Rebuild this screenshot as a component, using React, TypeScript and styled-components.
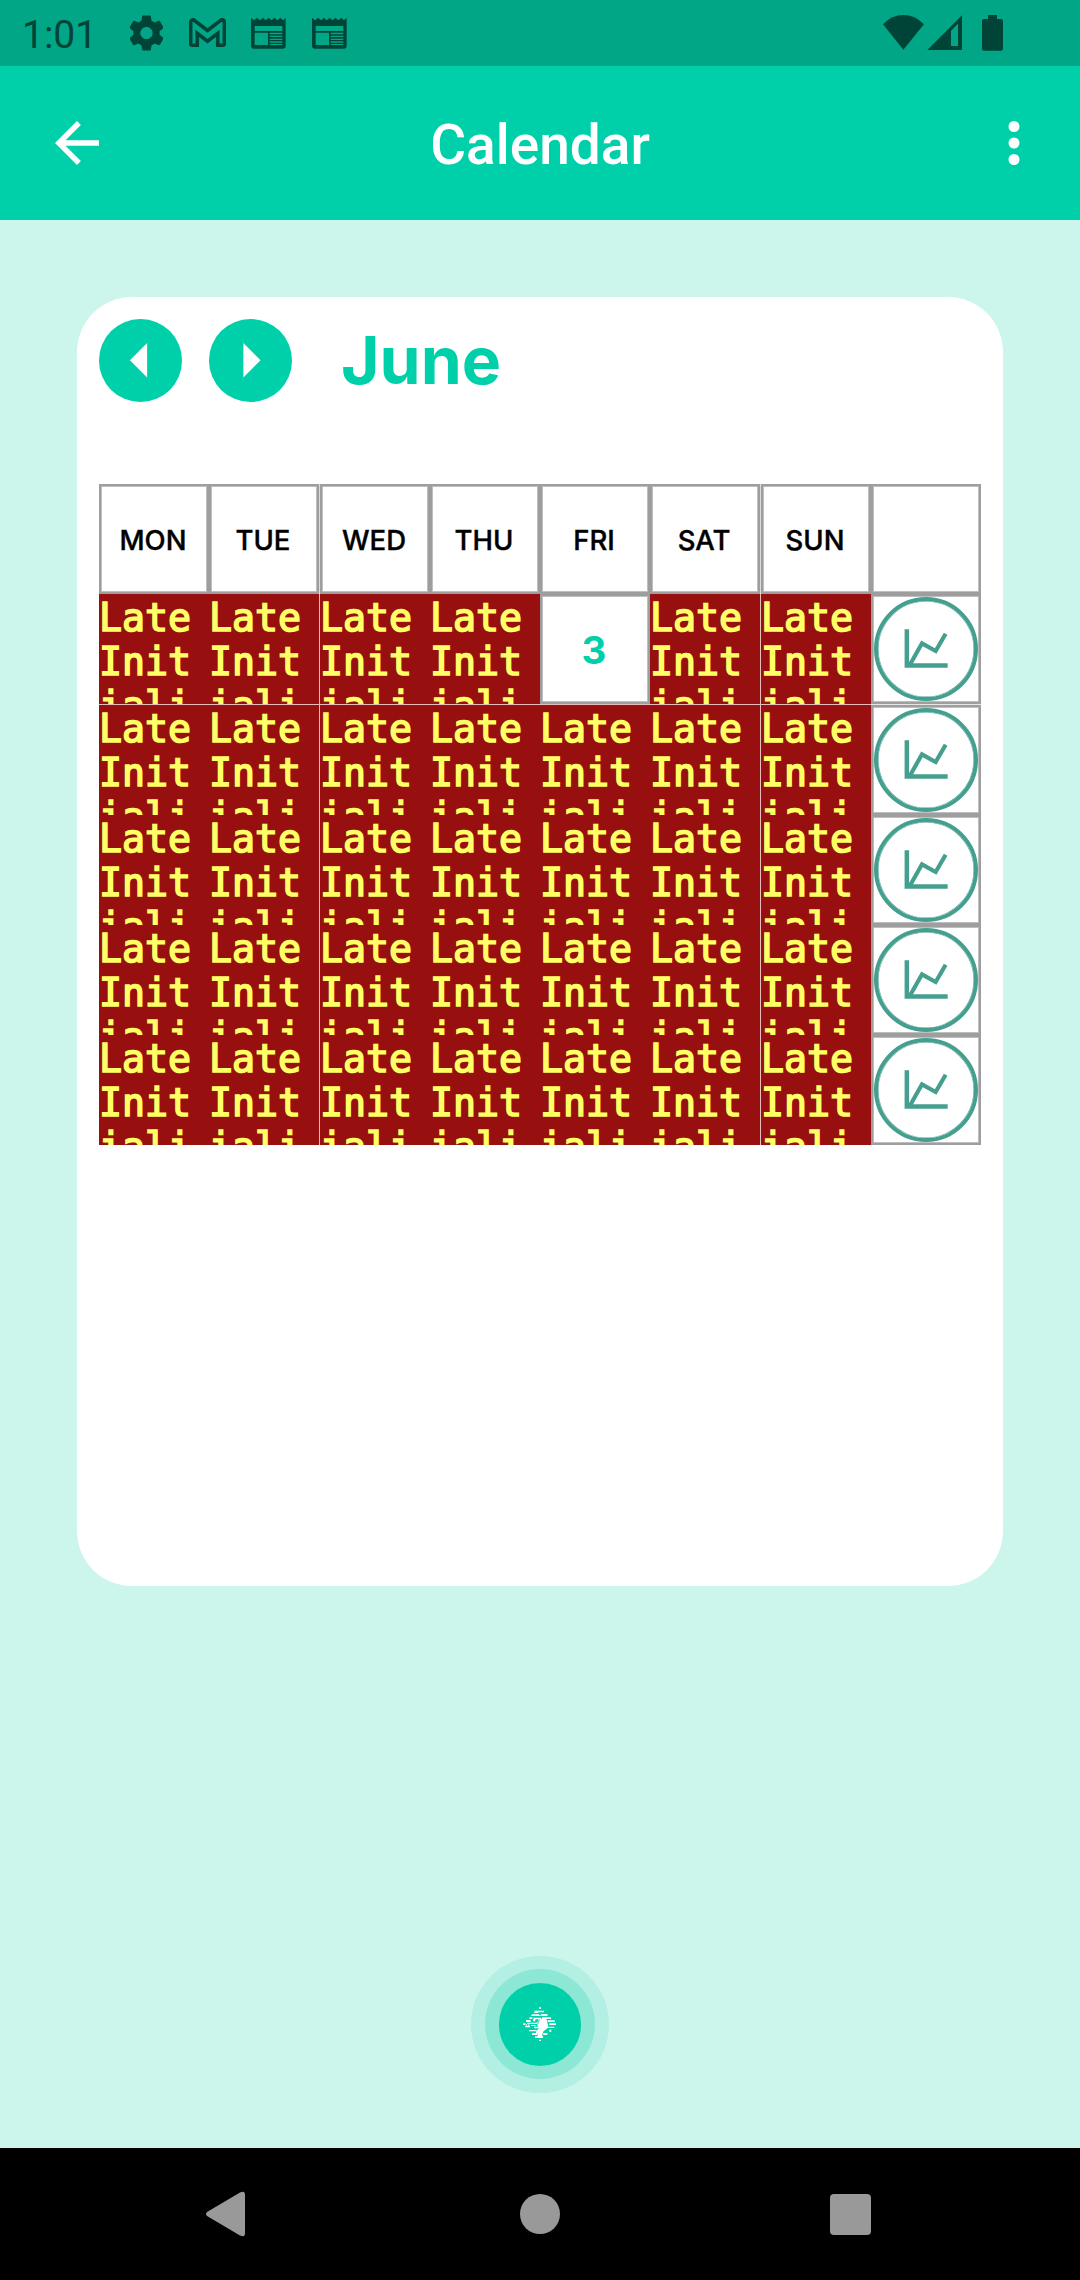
import React from "react";
import styled, { createGlobalStyle, css } from "styled-components";

const colors = {
  primary: "#00d0aa",
  primaryDark: "#00a686",
  statusIcon: "#004438",
  background: "#ccf5ec",
  border: "#9e9e9e",
  borderSoft: "#bebebe",
  error: "#970f0f",
  errorText: "#ffff66",
  chart: "#459f8f",
};

const GlobalStyle = createGlobalStyle`
  *, *::before, *::after { box-sizing: border-box; }
  body { margin: 0; background: ${colors.background}; }
  svg { display: block; flex: none; }
`;

const Screen = styled.div`
  display: flex;
  flex-direction: column;
  width: 1080px;
  height: 2280px;
  background: ${colors.background};
  font-family: Inter, Roboto, sans-serif;
  overflow: hidden;
`;

const StatusBar = styled.div`
  display: flex;
  align-items: center;
  justify-content: space-between;
  flex: none;
  height: 66px;
  padding: 0 77px 0 22px;
  background: ${colors.primaryDark};
  color: ${colors.statusIcon};
`;

const StatusGroup = styled.div`
  display: flex;
  align-items: center;
`;

const NotificationIcons = styled(StatusGroup)`
  gap: 25.5px;
`;

const Clock = styled.span`
  width: 108px;
  padding-top: 3px;
  font: 400 39px/46px Roboto, sans-serif;
`;

const AppBar = styled.header`
  display: grid;
  grid-template-columns: 66px 1fr 66px;
  align-items: center;
  flex: none;
  height: 154px;
  padding: 0 33px 0 44px;
  background: ${colors.primary};
  color: #fff;
`;

const Title = styled.h1`
  margin: 0 11px 0 0;
  padding-top: 4px;
  text-align: center;
  font: 500 55px/64px Roboto, sans-serif;
`;

const IconButton = styled.button`
  display: flex;
  width: 66px;
  height: 66px;
  padding: 0;
  border: 0;
  background: none;
  color: inherit;
`;

const Body = styled.main`
  display: flex;
  flex-direction: column;
  align-items: center;
  flex: 1;
  padding: 77px 77px 55px;
`;

const Card = styled.section`
  width: 926px;
  height: 1289px;
  padding: 22px;
  border-radius: 55px;
  background: #fff;
`;

const MonthBar = styled.div`
  display: flex;
  align-items: center;
  gap: 27.5px;
  height: 83px;
  margin-bottom: 82px;
`;

const RoundButton = styled.button`
  width: 82.5px;
  height: 82.5px;
  padding: 0;
  border: 0;
  border-radius: 50%;
  background: ${colors.primary};
  color: #fff;
`;

const MonthName = styled.h2`
  margin: 0 0 2px 22px;
  color: ${colors.primary};
  font: 700 66px/80px Inter, sans-serif;
`;

const MonthGrid = styled.div`
  display: grid;
  grid-template-columns: 110px 111px 110px 110px 110px 111px 110px 110px;
  grid-template-rows: 110px 111px repeat(4, 110px);
`;

const Slot = styled.div<{ $seam: string }>`
  background: ${(p) => p.$seam};
`;

const cellBase = css`
  width: 110px;
  height: 110px;
  overflow: hidden;
`;

const Cell = styled.div`
  ${cellBase}
  display: flex;
  align-items: center;
  justify-content: center;
  border: 2px solid ${colors.border};
  box-shadow: inset 0 0 0 1px ${colors.borderSoft};
  background: #fff;
`;

const Weekday = styled.span`
  padding: 2px 2px 0 0;
  color: #000;
  font: 500 27.5px/34px Inter, sans-serif;
  -webkit-text-stroke: 0.4px #000;
`;

const DayNumber = styled.span`
  padding: 1px 2px 0 0;
  color: ${colors.primary};
  font: 700 38.5px/46px Inter, sans-serif;
`;

const ErrorCell = styled.div`
  ${cellBase}
  padding-top: 1.5px;
  background: ${colors.error};
  color: ${colors.errorText};
  font: 400 38.2px/44px "DejaVu Sans Mono", monospace;
  -webkit-text-stroke: 1.6px ${colors.errorText};
  word-break: break-all;
`;

const ChartButton = styled.button`
  display: flex;
  align-items: center;
  justify-content: center;
  flex: none;
  width: 104px;
  height: 104px;
  padding: 0;
  border: 4.5px solid ${colors.chart};
  border-radius: 50%;
  background: transparent;
  color: ${colors.chart};
  box-shadow: inset 0 0 0 0.5px ${colors.chart};
`;

const Halo = styled.div<{ $size: number; $color: string }>`
  display: flex;
  align-items: center;
  justify-content: center;
  width: ${(p) => p.$size}px;
  height: ${(p) => p.$size}px;
  border-radius: 50%;
  background: ${(p) => p.$color};
`;

const FabArea = styled.div`
  margin-top: auto;
`;

const NavBar = styled.nav`
  display: flex;
  align-items: center;
  justify-content: space-between;
  flex: none;
  height: 132px;
  padding: 0 209px 0 206px;
  background: #000;
  color: #999;
`;

const Gear = () => (
  <svg width="33" height="42" viewBox="2.57 2 18.86 20" fill="currentColor">
    <path d="M19.43 12.98c.04-.32.07-.64.07-.98s-.03-.66-.07-.98l2.11-1.65c.19-.15.24-.42.12-.64l-2-3.46c-.12-.22-.39-.3-.61-.22l-2.49 1c-.52-.4-1.08-.73-1.69-.98l-.38-2.65C14.46 2.18 14.25 2 14 2h-4c-.25 0-.46.18-.49.42l-.38 2.65c-.61.25-1.17.59-1.69.98l-2.49-1c-.23-.09-.49 0-.61.22l-2 3.46c-.13.22-.07.49.12.64l2.11 1.65c-.04.32-.07.65-.07.98s.03.66.07.98l-2.11 1.65c-.19.15-.24.42-.12.64l2 3.46c.12.22.39.3.61.22l2.49-1c.52.4 1.08.73 1.69.98l.38 2.65c.03.24.24.42.49.42h4c.25 0 .46-.18.49-.42l.38-2.65c.61-.25 1.17-.59 1.69-.98l2.49 1c.23.09.49 0 .61-.22l2-3.46c.12-.22.07-.49-.12-.64l-2.11-1.65zM12 15.5c-1.93 0-3.5-1.57-3.5-3.5s1.57-3.5 3.5-3.5 3.5 1.57 3.5 3.5-1.57 3.5-3.5 3.5z" />
  </svg>
);

const Mail = () => (
  <svg width="37" height="30" viewBox="0 0 112 90" fill="none" stroke="currentColor" strokeWidth="11">
    <path d="M5 14Q5 5 14 5L56 37 98 5Q107 5 107 14V77Q107 82 102 82H87V46L56 70 25 46V82H10Q5 82 5 77Z" />
  </svg>
);

const News = () => (
  <svg width="35" height="32" viewBox="0 0 105 96" fill="currentColor">
    <path
      fillRule="evenodd"
      d="M0 2L9 10 18 2 27 10 36 2 44 10 53 2 62 10 70 2 79 10 88 2 96 10 104 2V86Q104 95 95 95H9Q0 95 0 86ZM11 27V42H94V27ZM11 47V84H51V47ZM56 47V52H94V47ZM56 56V60H94V56ZM56 65V69H94V65ZM56 73V77H94V73ZM56 81V84H94V81Z"
    />
  </svg>
);

const Wifi = () => (
  <svg width="41" height="66" viewBox="0 0 123 198" fill="currentColor">
    <path d="M0 73Q26 45 61 45T123 73L61 149Z" />
  </svg>
);

const Signal = () => (
  <svg width="41" height="66" viewBox="-10 0 123 198" fill="currentColor">
    <path fillRule="evenodd" d="M0 150L104 46V150ZM71 92V138H92V71Z" />
  </svg>
);

const Battery = () => (
  <svg width="38" height="66" viewBox="-51 0 114 198" fill="currentColor">
    <path d="M18 45H45V57H57Q63 57 63 63V146Q63 152 57 152H6Q0 152 0 146V63Q0 57 6 57H18Z" />
  </svg>
);

const Glyph = ({ d, size }: { d: string; size: number }) => (
  <svg width={size} height={size} viewBox="0 0 24 24" fill="currentColor">
    <path d={d} />
  </svg>
);

const LineChart = () => (
  <svg width="44" height="40" viewBox="0 0 132 120" fill="none" stroke="currentColor">
    <path strokeWidth="13.5" d="M8.5 1V109.500H131" />
    <path strokeWidth="12.500" d="M16 110L54 43 95 66 125 14" />
  </svg>
);

const Logo = () => (
  <svg width="36" height="36" viewBox="0 0 108 108" fill="#fff">
    <path d="M51 4h6v5h-6zM42 14h24v5H42zM37 14h5v3h-5zM36 19h12v2H36zM57 24h19v4H57zM30 25h22v4H30zM27 28h50v2H27zM22 34h9v5h-9zM35 35h22v5H35zM60 34h27v5H60zM12 42h14v6H12zM33 40h7v6h-7zM78 43h20v5H78zM4 52h6v5H4zM16 50h32v4H16zM82 52h20v5H82zM10 59h14v5H10zM27 57h14v3H27zM75 62h22v4H75zM21 72h22v4H21zM82 71h6v6h-6zM30 81h16v6H30zM64 81h12v6H64zM39 91h24v5H39zM51 101h6v4h-6z" />
    <path d="M46 57L54 42 60 37H68L76 43V51L79 58 74 69 65 75 61 84V96H47V82H42V76L51 67H36V62H48Z" />
    <circle cx="54" cy="42" r="4" fill="none" stroke="#fff" strokeWidth="2" />
    <circle cx="48" cy="51" r="3.5" fill={colors.primary} stroke="#fff" strokeWidth="2" />
    <circle cx="17" cy="57" r="4" fill={colors.primary} stroke="#fff" strokeWidth="2" />
  </svg>
);

const weekdays = ["MON", "TUE", "WED", "THU", "FRI", "SAT", "SUN", ""];
const weeks: (number | null)[][] = [
  [null, null, null, null, 3, null, null],
  [null, null, null, null, null, null, null],
  [null, null, null, null, null, null, null],
  [null, null, null, null, null, null, null],
  [null, null, null, null, null, null, null],
];

export default function App() {
  return (
    <>
      <GlobalStyle />
      <Screen>
        <StatusBar>
          <StatusGroup>
            <Clock>1:01</Clock>
            <NotificationIcons>
              <Gear />
              <Mail />
              <News />
              <News />
            </NotificationIcons>
          </StatusGroup>
          <StatusGroup>
            <Wifi />
            <Signal />
            <Battery />
          </StatusGroup>
        </StatusBar>

        <AppBar>
          <IconButton aria-label="Back">
            <Glyph size={66} d="M20 11H7.83l5.59-5.59L12 4l-8 8 8 8 1.41-1.41L7.83 13H20v-2z" />
          </IconButton>
          <Title>Calendar</Title>
          <IconButton aria-label="More">
            <Glyph
              size={66}
              d="M12 8a2 2 0 1 0 0-4 2 2 0 0 0 0 4zm0 2a2 2 0 1 0 0 4 2 2 0 0 0 0-4zm0 6a2 2 0 1 0 0 4 2 2 0 0 0 0-4z"
            />
          </IconButton>
        </AppBar>

        <Body>
          <Card>
            <MonthBar>
              <RoundButton aria-label="Previous month">
                <Glyph size={82.5} d="M14 7l-5 5 5 5V7z" />
              </RoundButton>
              <RoundButton aria-label="Next month">
                <Glyph size={82.5} d="M10 17l5-5-5-5v10z" />
              </RoundButton>
              <MonthName>June</MonthName>
            </MonthBar>
            <MonthGrid>
              {weekdays.map((name, i) => (
                <Slot key={i} $seam="#dcdcdc">
                  <Cell>
                    <Weekday>{name}</Weekday>
                  </Cell>
                </Slot>
              ))}
              {weeks.map((week, w) => (
                <React.Fragment key={w}>
                  {week.map((day, d) => (
                    <Slot key={d} $seam="#e6bcbc">
                      {day === null ? (
                        <ErrorCell>LateInitiali</ErrorCell>
                      ) : (
                        <Cell>
                          <DayNumber>{day}</DayNumber>
                        </Cell>
                      )}
                    </Slot>
                  ))}
                  <Slot $seam="#e6e6e6">
                    <Cell>
                      <ChartButton aria-label="Weekly chart">
                        <LineChart />
                      </ChartButton>
                    </Cell>
                  </Slot>
                </React.Fragment>
              ))}
            </MonthGrid>
          </Card>
          <FabArea>
            <Halo $size={137.5} $color="#b3efe3">
              <Halo $size={110} $color="#8ce8d5">
                <Halo $size={82.5} $color={colors.primary}>
                  <Logo />
                </Halo>
              </Halo>
            </Halo>
          </FabArea>
        </Body>

        <NavBar>
          <svg width="44" height="46" viewBox="0 0 44 46" fill="currentColor">
            <path d="M1 21L34 1.5Q39 -1 39 4V42Q39 47 34 44.500L1 25Q-1 23 1 21Z" />
          </svg>
          <svg width="40" height="40" viewBox="0 0 40 40" fill="currentColor">
            <circle cx="20" cy="20" r="20" />
          </svg>
          <svg width="41" height="41" viewBox="0 0 41 41" fill="currentColor">
            <rect width="41" height="41" rx="4" />
          </svg>
        </NavBar>
      </Screen>
    </>
  );
}
